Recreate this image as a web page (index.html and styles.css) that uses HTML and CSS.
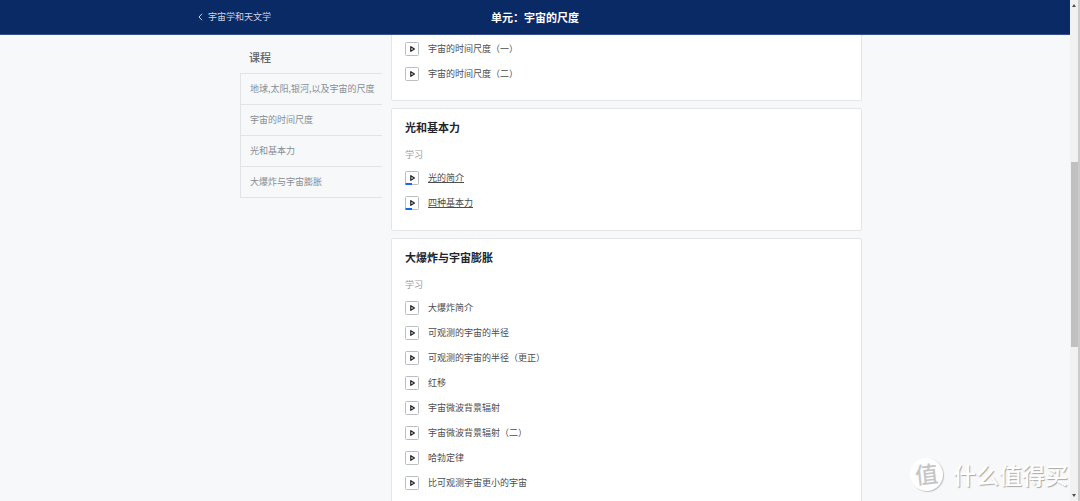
FILE: index.html
```html
<!DOCTYPE html>
<html lang="zh-CN">
<head>
<meta charset="utf-8">
<title>单元：宇宙的尺度</title>
<link rel="stylesheet" href="styles.css">
</head>
<body>
<svg class="defs" aria-hidden="true">
  <symbol id="play" viewBox="0 0 14 14"><rect class="frame" x="0.5" y="0.5" width="13" height="13" rx="1"/><path class="triangle" d="M5.8 4.7v4.6L9.4 7z"/></symbol>
  <symbol id="play-started" viewBox="0 0 14 14"><rect class="frame" x="0.5" y="0.5" width="13" height="13" rx="1"/><path class="triangle" d="M5.8 4.7v4.6L9.4 7z"/><path class="progress" d="M0.5 12h6.5v2H0.5z"/></symbol>
</svg>
<div class="page">
  <header class="topbar">
    <div class="topbar-inner">
      <a class="back" href="#"><svg class="chevron" viewBox="0 0 5 8" aria-hidden="true"><path d="M4 .8L1 4l3 3.2"/></svg>宇宙学和天文学</a>
      <h1 class="unit">单元：宇宙的尺度</h1>
    </div>
  </header>
  <div class="content">
    <nav class="sidebar" aria-label="课程">
      <h2 class="sidebar-title">课程</h2>
      <ul class="courses">
        <li><a href="#">地球,太阳,银河,以及宇宙的尺度</a></li>
        <li><a href="#">宇宙的时间尺度</a></li>
        <li><a href="#">光和基本力</a></li>
        <li><a href="#">大爆炸与宇宙膨胀</a></li>
      </ul>
    </nav>
    <main class="cards">
      <section class="card card-continued">
        <ul class="lessons">
          <li><a href="#"><svg class="icon"><use href="#play"/></svg>宇宙的时间尺度（一）</a></li>
          <li><a href="#"><svg class="icon"><use href="#play"/></svg>宇宙的时间尺度（二）</a></li>
        </ul>
      </section>
      <section class="card">
        <h2 class="card-title">光和基本力</h2>
        <p class="label">学习</p>
        <ul class="lessons">
          <li><a class="started" href="#"><svg class="icon"><use href="#play-started"/></svg><span>光的简介</span></a></li>
          <li><a class="started" href="#"><svg class="icon"><use href="#play-started"/></svg><span>四种基本力</span></a></li>
        </ul>
      </section>
      <section class="card">
        <h2 class="card-title">大爆炸与宇宙膨胀</h2>
        <p class="label">学习</p>
        <ul class="lessons">
          <li><a href="#"><svg class="icon"><use href="#play"/></svg>大爆炸简介</a></li>
          <li><a href="#"><svg class="icon"><use href="#play"/></svg>可观测的宇宙的半径</a></li>
          <li><a href="#"><svg class="icon"><use href="#play"/></svg>可观测的宇宙的半径（更正）</a></li>
          <li><a href="#"><svg class="icon"><use href="#play"/></svg>红移</a></li>
          <li><a href="#"><svg class="icon"><use href="#play"/></svg>宇宙微波背景辐射</a></li>
          <li><a href="#"><svg class="icon"><use href="#play"/></svg>宇宙微波背景辐射（二）</a></li>
          <li><a href="#"><svg class="icon"><use href="#play"/></svg>哈勃定律</a></li>
          <li><a href="#"><svg class="icon"><use href="#play"/></svg>比可观测宇宙更小的宇宙</a></li>
        </ul>
      </section>
    </main>
  </div>
</div>
<div class="scrollbar" aria-hidden="true">
  <svg class="arrow" viewBox="0 0 4 3"><path d="M0 3L2 0l2 3z"/></svg>
  <div class="track"><div class="thumb"></div></div>
  <svg class="arrow" viewBox="0 0 4 3"><path d="M0 0L2 3l2-3z"/></svg>
</div>
<div class="watermark"><span class="seal">值</span><span>什么值得买</span></div>
</body>
</html>
```
FILE: styles.css
```css
* { box-sizing: border-box; }

body {
  display: flex;
  height: 100vh;
  margin: 0;
  overflow: hidden;
  position: relative;
  background: #f7f8fa;
  color: #4a4d51;
  font: 9px/14px "Noto Sans CJK SC", "Noto Sans", sans-serif;
}

h1, h2, p, ul { margin: 0; padding: 0; }
ul { list-style: none; }
a { color: inherit; text-decoration: none; }
.defs { position: absolute; width: 0; height: 0; }

.page { flex: 1; min-width: 0; }

.topbar {
  background: #0a2a66;
  border-bottom: 1px solid #35508a;
  color: #fff;
}
.topbar-inner {
  display: grid;
  grid-template-columns: 1fr auto 1fr;
  align-items: center;
  max-width: 688px;
  height: 34px;
  margin: 0 auto;
  padding: 0 7px;
}
.back {
  display: flex;
  align-items: center;
  gap: 5px;
  color: #ced4e0;
}
.chevron { width: 5px; height: 8px; fill: none; stroke: #ced4e0; }
.unit { font-size: 11px; line-height: 16px; font-weight: 700; }

.content {
  display: flex;
  align-items: flex-start;
  gap: 9px;
  max-width: 688px;
  margin: 0 auto;
  padding: 0 17px 0 49px;
}

.sidebar { flex: 0 0 142px; min-width: 0; padding-top: 14px; }
.sidebar-title {
  padding: 0 9px 8px;
  color: #626569;
  font-size: 11px;
  line-height: 16px;
  font-weight: 500;
}
.courses { border-top: 1px solid #e2e3e5; border-left: 1px solid #e2e3e5; }
.courses a {
  display: block;
  padding: 8px 0 8px 9px;
  border-bottom: 1px solid #e2e3e5;
  color: #888d93;
  white-space: nowrap;
}

.cards { flex: 1; display: grid; gap: 7px; min-width: 0; }
.card {
  padding: 10px 13px 15px;
  background: #fff;
  border: 1px solid #e4e5e7;
  border-radius: 2px;
}
.card-continued { padding-top: 1px; border-top: 0; padding-bottom: 14px; border-radius: 0 0 2px 2px; }
.card-title { color: #21242c; font-size: 11px; line-height: 16px; font-weight: 700; }
.label { padding: 13px 0 3px; color: #999b9e; }

.lessons a { display: flex; align-items: center; gap: 9px; height: 25px; }
.icon { flex: none; width: 14px; height: 14px; }
.frame { fill: #fff; stroke: #babec2; }
.triangle { fill: #fff; stroke: #21242c; stroke-width: 1.3; stroke-linejoin: round; }
.progress { fill: #1865f2; }
.started span { text-decoration: underline; }

.scrollbar {
  display: flex;
  flex-direction: column;
  align-items: center;
  width: 10px;
  padding: 4px 0;
  background: #f1f1f1;
  border-right: 2px solid #cbcbcb;
}
.arrow { width: 4px; height: 3px; fill: #505050; }
.track { flex: 1; align-self: stretch; padding: 155px 0 0 1px; }
.thumb { height: 185px; background: #c1c1c1; }

.watermark {
  position: absolute;
  right: 12px;
  bottom: 10px;
  display: flex;
  align-items: center;
  gap: 10px;
  color: #fff;
  font-size: 23px;
  font-weight: 500;
  line-height: 34px;
  text-shadow: 1px 1px 1px #a8a8a8;
}
.seal {
  width: 33px;
  height: 33px;
  border-radius: 50%;
  background: #fff;
  box-shadow: 1px 1px 1px #c2c2c2;
  color: #c6c6c6;
  font-size: 23px;
  line-height: 31px;
  text-align: center;
  text-shadow: none;
  transform: rotate(-6deg);
}
```
